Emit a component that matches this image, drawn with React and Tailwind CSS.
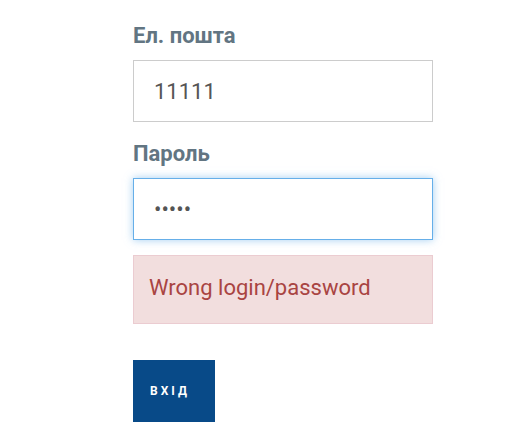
import React from "react";

export default function App() {
  return (
    <div className="w-[524px] h-[437px] bg-white" style={{ fontFamily: "Roboto, 'Liberation Sans', sans-serif" }}>
      <div className="ml-[133px] w-[300px] pt-[24px] flex flex-col">
        <label className="text-[22px] leading-[24px] font-bold text-[#627582]">Ел. пошта</label>
        <input
          type="text"
          defaultValue="11111"
          className="mt-[12px] h-[62px] w-[300px] border border-[#cccccc] bg-white pl-[20px] pr-[18px] text-[22px] text-[#555555] outline-none"
          style={{ fontFamily: "Roboto, sans-serif" }}
        />
        <label className="mt-[20px] text-[22px] leading-[24px] font-bold text-[#627582]">Пароль</label>
        <input
          type="password"
          defaultValue="11111"
          className="mt-[12px] h-[62px] w-[300px] border border-[#66afe9] bg-white pl-[20px] pr-[18px] text-[22px] text-[#555555] outline-none shadow-[0_0_8px_rgba(102,175,233,0.6)]"
          style={{ fontFamily: "Roboto, sans-serif" }}
        />
        <div className="mt-[15px] h-[69px] border border-[#ebccd1] bg-[#f2dede] pl-[15px] pt-[15px] text-[22px] leading-[33px] text-[#a94442]">
          Wrong login/password
        </div>
        <button className="mt-[36px] h-[62px] w-[82px] bg-[#084a88] text-white text-[12px] font-bold tracking-[3px] flex items-center justify-start pl-[17px]">
          ВХІД
        </button>
      </div>
    </div>
  );
}
